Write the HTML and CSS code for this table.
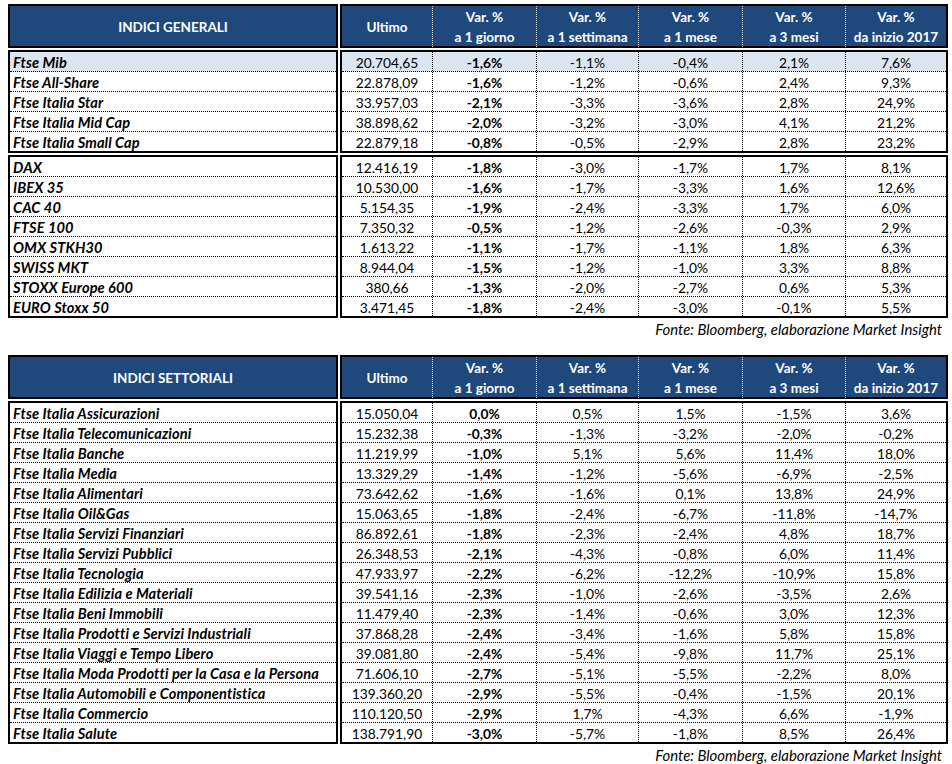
FILE: index.html
```html
<!DOCTYPE html>
<html lang="it">
<head>
<meta charset="utf-8">
<title>Indici</title>
<link rel="stylesheet" href="styles.css">
</head>
<body>
<div class="page">

  <section class="table">
    <div class="pair hdr">
      <div class="box name-hdr">INDICI GENERALI</div>
      <div class="box data-hdr">
        <div class="hc single">Ultimo</div>
        <div class="hc">Var. %<br>a 1 giorno</div>
        <div class="hc">Var. %<br>a 1 settimana</div>
        <div class="hc">Var. %<br>a 1 mese</div>
        <div class="hc">Var. %<br>a 3 mesi</div>
        <div class="hc last">Var. %<br>da inizio 2017</div>
      </div>
    </div>

    <div class="pair grp">
      <div class="box names">
        <div class="n hl">Ftse Mib</div>
        <div class="n">Ftse All-Share</div>
        <div class="n">Ftse Italia Star</div>
        <div class="n">Ftse Italia Mid Cap</div>
        <div class="n end">Ftse Italia Small Cap</div>
      </div>
      <div class="box data">
        <div class="r hl"><span>20.704,65</span><b>-1,6%</b><span>-1,1%</span><span>-0,4%</span><span>2,1%</span><span>7,6%</span></div>
        <div class="r"><span>22.878,09</span><b>-1,6%</b><span>-1,2%</span><span>-0,6%</span><span>2,4%</span><span>9,3%</span></div>
        <div class="r"><span>33.957,03</span><b>-2,1%</b><span>-3,3%</span><span>-3,6%</span><span>2,8%</span><span>24,9%</span></div>
        <div class="r"><span>38.898,62</span><b>-2,0%</b><span>-3,2%</span><span>-3,0%</span><span>4,1%</span><span>21,2%</span></div>
        <div class="r end"><span>22.879,18</span><b>-0,8%</b><span>-0,5%</span><span>-2,9%</span><span>2,8%</span><span>23,2%</span></div>
      </div>
    </div>

    <div class="pair grp grp2">
      <div class="box names">
        <div class="n">DAX</div>
        <div class="n">IBEX 35</div>
        <div class="n">CAC 40</div>
        <div class="n">FTSE 100</div>
        <div class="n">OMX STKH30</div>
        <div class="n">SWISS MKT</div>
        <div class="n">STOXX Europe 600</div>
        <div class="n end">EURO Stoxx 50</div>
      </div>
      <div class="box data">
        <div class="r"><span>12.416,19</span><b>-1,8%</b><span>-3,0%</span><span>-1,7%</span><span>1,7%</span><span>8,1%</span></div>
        <div class="r"><span>10.530,00</span><b>-1,6%</b><span>-1,7%</span><span>-3,3%</span><span>1,6%</span><span>12,6%</span></div>
        <div class="r"><span>5.154,35</span><b>-1,9%</b><span>-2,4%</span><span>-3,3%</span><span>1,7%</span><span>6,0%</span></div>
        <div class="r"><span>7.350,32</span><b>-0,5%</b><span>-1,2%</span><span>-2,6%</span><span>-0,3%</span><span>2,9%</span></div>
        <div class="r"><span>1.613,22</span><b>-1,1%</b><span>-1,7%</span><span>-1,1%</span><span>1,8%</span><span>6,3%</span></div>
        <div class="r"><span>8.944,04</span><b>-1,5%</b><span>-1,2%</span><span>-1,0%</span><span>3,3%</span><span>8,8%</span></div>
        <div class="r"><span>380,66</span><b>-1,3%</b><span>-2,0%</span><span>-2,7%</span><span>0,6%</span><span>5,3%</span></div>
        <div class="r end"><span>3.471,45</span><b>-1,8%</b><span>-2,4%</span><span>-3,0%</span><span>-0,1%</span><span>5,5%</span></div>
      </div>
    </div>
    <p class="source">Fonte: Bloomberg, elaborazione Market Insight</p>
  </section>

  <section class="table second">
    <div class="pair hdr">
      <div class="box name-hdr">INDICI SETTORIALI</div>
      <div class="box data-hdr">
        <div class="hc single">Ultimo</div>
        <div class="hc">Var. %<br>a 1 giorno</div>
        <div class="hc">Var. %<br>a 1 settimana</div>
        <div class="hc">Var. %<br>a 1 mese</div>
        <div class="hc">Var. %<br>a 3 mesi</div>
        <div class="hc last">Var. %<br>da inizio 2017</div>
      </div>
    </div>

    <div class="pair grp">
      <div class="box names">
        <div class="n">Ftse Italia Assicurazioni</div>
        <div class="n">Ftse Italia Telecomunicazioni</div>
        <div class="n">Ftse Italia Banche</div>
        <div class="n">Ftse Italia Media</div>
        <div class="n">Ftse Italia Alimentari</div>
        <div class="n">Ftse Italia Oil&amp;Gas</div>
        <div class="n">Ftse Italia Servizi Finanziari</div>
        <div class="n">Ftse Italia Servizi Pubblici</div>
        <div class="n">Ftse Italia Tecnologia</div>
        <div class="n">Ftse Italia Edilizia e Materiali</div>
        <div class="n">Ftse Italia Beni Immobili</div>
        <div class="n">Ftse Italia Prodotti e Servizi Industriali</div>
        <div class="n">Ftse Italia Viaggi e Tempo Libero</div>
        <div class="n">Ftse Italia Moda Prodotti per la Casa e la Persona</div>
        <div class="n">Ftse Italia Automobili e Componentistica</div>
        <div class="n">Ftse Italia Commercio</div>
        <div class="n end">Ftse Italia Salute</div>
      </div>
      <div class="box data">
        <div class="r"><span>15.050,04</span><b>0,0%</b><span>0,5%</span><span>1,5%</span><span>-1,5%</span><span>3,6%</span></div>
        <div class="r"><span>15.232,38</span><b>-0,3%</b><span>-1,3%</span><span>-3,2%</span><span>-2,0%</span><span>-0,2%</span></div>
        <div class="r"><span>11.219,99</span><b>-1,0%</b><span>5,1%</span><span>5,6%</span><span>11,4%</span><span>18,0%</span></div>
        <div class="r"><span>13.329,29</span><b>-1,4%</b><span>-1,2%</span><span>-5,6%</span><span>-6,9%</span><span>-2,5%</span></div>
        <div class="r"><span>73.642,62</span><b>-1,6%</b><span>-1,6%</span><span>0,1%</span><span>13,8%</span><span>24,9%</span></div>
        <div class="r"><span>15.063,65</span><b>-1,8%</b><span>-2,4%</span><span>-6,7%</span><span>-11,8%</span><span>-14,7%</span></div>
        <div class="r"><span>86.892,61</span><b>-1,8%</b><span>-2,3%</span><span>-2,4%</span><span>4,8%</span><span>18,7%</span></div>
        <div class="r"><span>26.348,53</span><b>-2,1%</b><span>-4,3%</span><span>-0,8%</span><span>6,0%</span><span>11,4%</span></div>
        <div class="r"><span>47.933,97</span><b>-2,2%</b><span>-6,2%</span><span>-12,2%</span><span>-10,9%</span><span>15,8%</span></div>
        <div class="r"><span>39.541,16</span><b>-2,3%</b><span>-1,0%</span><span>-2,6%</span><span>-3,5%</span><span>2,6%</span></div>
        <div class="r"><span>11.479,40</span><b>-2,3%</b><span>-1,4%</span><span>-0,6%</span><span>3,0%</span><span>12,3%</span></div>
        <div class="r"><span>37.868,28</span><b>-2,4%</b><span>-3,4%</span><span>-1,6%</span><span>5,8%</span><span>15,8%</span></div>
        <div class="r"><span>39.081,80</span><b>-2,4%</b><span>-5,4%</span><span>-9,8%</span><span>11,7%</span><span>25,1%</span></div>
        <div class="r"><span>71.606,10</span><b>-2,7%</b><span>-5,1%</span><span>-5,5%</span><span>-2,2%</span><span>8,0%</span></div>
        <div class="r"><span>139.360,20</span><b>-2,9%</b><span>-5,5%</span><span>-0,4%</span><span>-1,5%</span><span>20,1%</span></div>
        <div class="r"><span>110.120,50</span><b>-2,9%</b><span>1,7%</span><span>-4,3%</span><span>6,6%</span><span>-1,9%</span></div>
        <div class="r end"><span>138.791,90</span><b>-3,0%</b><span>-5,7%</span><span>-1,8%</span><span>8,5%</span><span>26,4%</span></div>
      </div>
    </div>
    <p class="source">Fonte: Bloomberg, elaborazione Market Insight</p>
  </section>

</div>
</body>
</html>
```

FILE: styles.css
```css
* { box-sizing: border-box; }

html, body {
  margin: 0;
  padding: 0;
  background: #ffffff;
}

body {
  font-family: Lato, "Liberation Sans", sans-serif;
  color: #000000;
}

.page {
  width: 952px;
  padding: 4px 0 0 8px;
}

.table {
  width: 940px;
}

.table.second {
  margin-top: 17px;
}

.pair {
  display: grid;
  grid-template-columns: 330px 608px;
  column-gap: 2px;
}

.pair.grp {
  margin-top: 2px;
}

.box {
  border: 2px solid #000000;
}

/* header */
.name-hdr,
.data-hdr {
  background: #1f497d;
  color: #ffffff;
  font-weight: bold;
  font-size: 13.5px;
  height: 44px;
}

.name-hdr {
  display: flex;
  align-items: center;
  justify-content: center;
  padding-top: 1px;
}

.data-hdr {
  display: grid;
  grid-template-columns: 91px 104px 102px 104px 103px 100px;
}

.hc {
  text-align: center;
  line-height: 20px;
  padding-top: 1px;
  border-right: 1px dotted #d8dde6;
}

.hc.single {
  display: flex;
  align-items: center;
  justify-content: center;
  padding-top: 1px;
}

.hc.last {
  border-right: none;
}

/* body */
.names .n {
  height: 20px;
  line-height: 21px;
  padding-left: 3px;
  font-weight: bold;
  font-style: italic;
  font-size: 14.6px;
  letter-spacing: 0.1px;
  border-bottom: 1px dotted #000000;
  white-space: nowrap;
}

.names .n.end,
.data .r.end {
  height: 19px;
  border-bottom: none;
}

.data .r {
  display: grid;
  grid-template-columns: 91px 104px 102px 104px 103px 100px;
  height: 20px;
  border-bottom: 1px dotted #000000;
}

.data .r > span,
.data .r > b {
  display: block;
  text-align: center;
  line-height: 21px;
  height: 19px;
  font-size: 13.8px;
  border-right: 1px dotted #000000;
}

.data .r > :last-child {
  border-right: none;
}

.data .r > b {
  font-weight: bold;
}

.data .r > span {
  font-weight: normal;
}

.hl {
  background: #dce6f1;
}

.source {
  margin: 0;
  height: 20px;
  line-height: 22px;
  padding-right: 6px;
  text-align: right;
  font-style: italic;
  font-size: 14.9px;
}
```
